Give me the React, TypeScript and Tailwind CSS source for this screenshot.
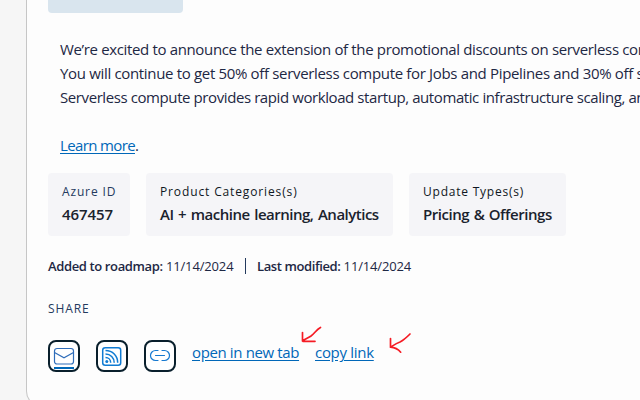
import React from "react";

type CardProps = { label: string; value: string; box: string; labelCls: string; valueCls: string };

function InfoCard({ label, value, box, labelCls, valueCls }: CardProps) {
  return (
    <div className={`h-[63px] shrink-0 rounded-[4px] bg-[#f5f5f8] pl-[14px] pt-[10px] whitespace-nowrap ${box}`}>
      <div className={`h-[18px] text-[12px] leading-[18px] ${labelCls}`}>{label}</div>
      <div className={`mt-px h-6 text-[15px] leading-6 font-semibold text-[#1a222d] ${valueCls}`}>{value}</div>
    </div>
  );
}

function IconButton({ children }: { children: React.ReactNode }) {
  return (
    <button className="relative size-8 rounded-[8px] border-2 border-[#091f2c] bg-white">
      {children}
    </button>
  );
}

export default function App() {
  return (
    <div className="h-[400px] w-[640px] overflow-hidden bg-[#f6f6f6] pl-[26px] font-['Open_Sans','Noto_Sans',sans-serif] text-[#1e2844]">
      <div className="h-[407px] w-[700px] rounded-bl-[16px] border-b border-l border-[#c6c6c6] bg-[#fdfdfd] pl-[21px]">
        <div className="h-[13px] w-[135px] rounded-b-[4px] bg-[#d9e5ee]" />

        <div className="mt-6 pl-3 text-[15px] leading-6 whitespace-nowrap">
          <p className="tracking-[-0.35px]">We’re excited to announce the extension of the promotional discounts on serverless com</p>
          <p className="tracking-[-0.33px]">You will continue to get 50% off serverless compute for Jobs and Pipelines and 30% off s</p>
          <p className="tracking-[-0.41px]">Serverless compute provides rapid workload startup, automatic infrastructure scaling, an</p>
          <p className="mt-6 tracking-[-0.63px]">
            <a className="text-[#0067b8] underline underline-offset-2">Learn more</a>.
          </p>
        </div>

        <div className="mt-4 flex gap-4">
          <InfoCard label="Azure ID" value="467457" box="w-[82px]" labelCls="tracking-[0.85px] text-[#243a5e]" valueCls="tracking-[-0.1px]" />
          <InfoCard label="Product Categories(s)" value="AI + machine learning, Analytics" box="w-[247px]" labelCls="tracking-[0.87px] text-[#0f1723]" valueCls="tracking-[-0.5px] [word-spacing:1.2px]" />
          <InfoCard label="Update Types(s)" value="Pricing & Offerings" box="w-[157px]" labelCls="tracking-[0.78px] text-[#0f1723]" valueCls="tracking-[-0.45px] [word-spacing:1px]" />
        </div>

        <div className="mt-5 flex h-5 items-center text-[13px] leading-5 whitespace-nowrap">
          <div className="w-[197px] tracking-[-0.15px]"><span className="font-semibold tracking-[-0.37px]">Added to roadmap:</span> 11/14/2024</div>
          <div className="h-4 w-px bg-[#243a5e]" />
          <div className="ml-[11px] tracking-[-0.15px]"><span className="font-semibold tracking-[-0.4px]">Last modified:</span> 11/14/2024</div>
        </div>

        <div className="mt-6 h-[18px] text-[12px] leading-[18px] tracking-[0.9px] text-[#243a5e]">SHARE</div>

        <div className="mt-[22px] flex items-center gap-4">
          <IconButton>
            <svg className="absolute inset-0 size-7" viewBox="0 0 28 28" fill="none" stroke="#2f6dba" strokeWidth="1.2">
              <rect x="4.5" y="6.5" width="19" height="15.5" rx="2.5" />
              <path d="M4.5 10.5 14 15.7l9.500-5.200" />
              <path d="M4 26h20" strokeWidth="2" stroke="#0067b8" />
            </svg>
          </IconButton>
          <IconButton>
            <svg className="absolute inset-0 size-7" viewBox="0 0 28 28" fill="none" stroke="#0f7bd3" strokeWidth="1.5">
              <rect x="4.700" y="5.700" width="18" height="17.500" rx="2.500" />
              <path d="M7.500 8.500c7 0 12.200 5.200 12.200 12.200M7.500 12c5 0 8.700 3.700 8.700 8.700M7.500 15.500c3 0 5.200 2.200 5.200 5.200" />
              <circle cx="8.800" cy="19.500" r="1.500" fill="#0f7bd3" stroke="none" />
            </svg>
          </IconButton>
          <IconButton>
            <svg className="absolute inset-0 size-7" viewBox="0 0 28 28" fill="none" stroke="#1679d0" strokeWidth="1.2" strokeLinecap="round">
              <path d="M12 8.500H9.500a5 5 0 0 0 0 10h2.500M16 8.500h2.500a5 5 0 0 1 0 10h-2.500M9.500 13.500h9" />
            </svg>
          </IconButton>
          <div className="relative -top-[4px] flex gap-4 text-[15px] leading-6 tracking-[-0.37px] whitespace-nowrap text-[#0067b8]">
            <a className="w-[107px] underline underline-offset-2">open in new tab</a>
            <a className="tracking-[-0.3px] underline underline-offset-2">copy link</a>
            <svg className="absolute -top-[14px] left-[108px] h-8 w-28" viewBox="300 326 112 32" fill="none" stroke="#f51b24" strokeWidth="1.700" strokeLinecap="round" strokeLinejoin="round">
              <path d="M320.500 327.500c-4 2-6 6-9.500 8.500-3 2-6 3-8.500 5M302.500 332.500v8.500M303 341.300h12" />
              <path d="M410 334c-3 3-6 6-10 8-4 1.500-6 3-9.500 5.200M390.500 338.500v8.700M390.500 347.200c4 .3 7.500 1.800 10.200 5" />
            </svg>
          </div>
        </div>
      </div>
    </div>
  );
}
